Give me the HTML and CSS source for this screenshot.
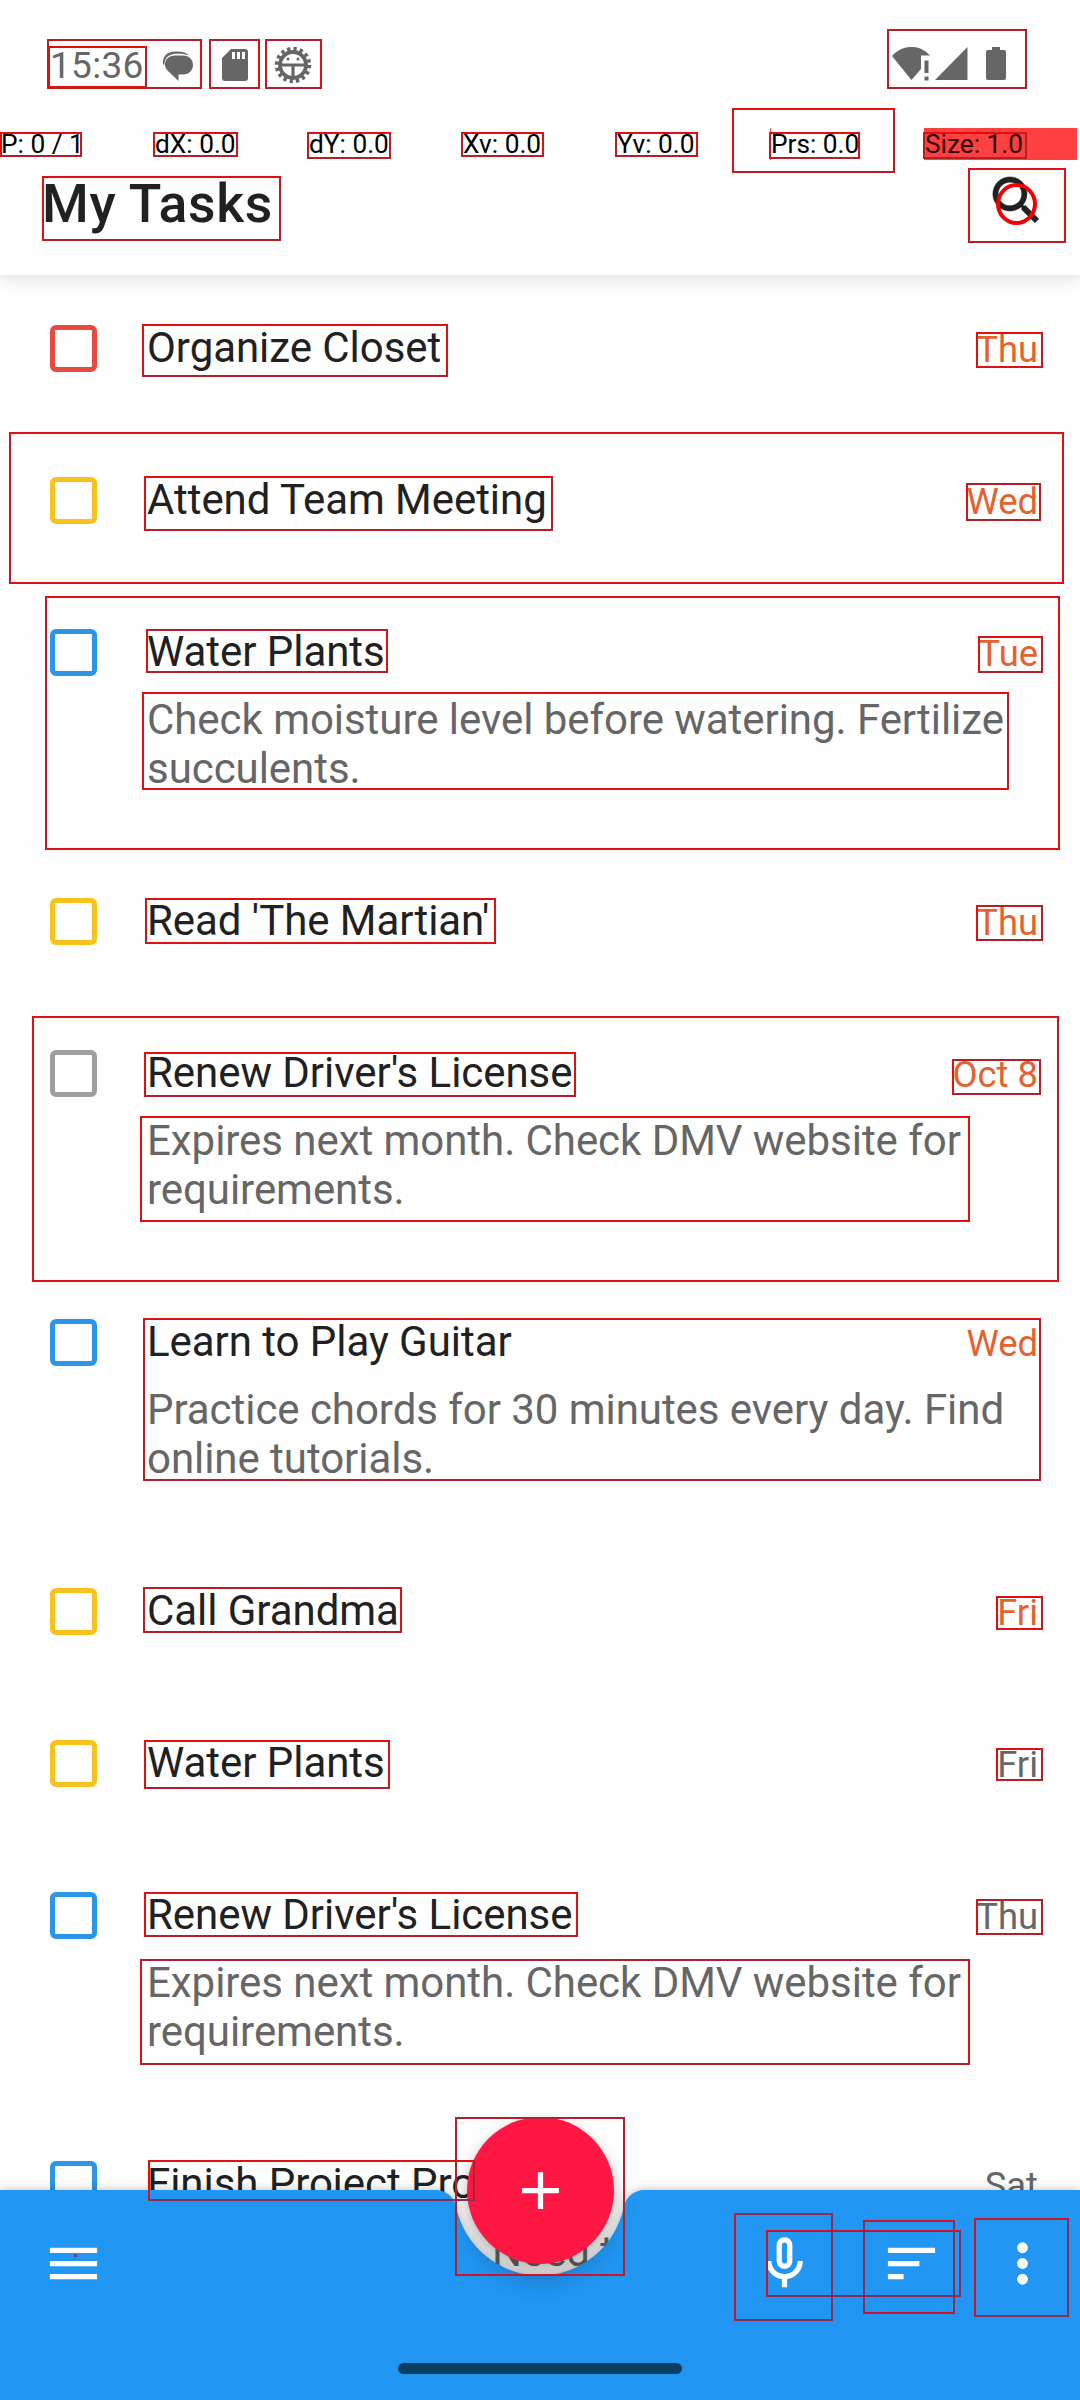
FILE: index.html
```html
<!DOCTYPE html>
<html lang="en">
<head>
<meta charset="utf-8">
<title>My Tasks</title>
<link rel="stylesheet" href="styles.css">
</head>
<body>
<div class="screen">
  <header class="header">
    <div class="status">
      <div class="status-left">
        <span class="clock">15:36</span>
        <svg class="ic-chat" width="32" height="32" viewBox="0 0 32 32"><path d="M1 13C0 5 6 .5 13 .5c6 0 11 .5 14 4-4-2-9-2-14-1.700C6 3.500 2 8 2.500 14z"/><path d="M13 4.500h8c6 0 10 4 10 9.500s-4 9.500-10 9.500h-4.500V30L6 20c-2-2-3-4-3-6.500C3 8 7 4.500 13 4.500z"/></svg>
        <svg class="ic-sd" width="26" height="32" viewBox="0 0 26 32"><path fill-rule="evenodd" d="M9 0h14a3 3 0 0 1 3 3v26a3 3 0 0 1-3 3H3a3 3 0 0 1-3-3V9zM10 3v7h3V3zM15 3v7h3V3zM20 3v7h3V3z"/></svg>
        <svg class="ic-gear" width="38" height="38" viewBox="-19 -19 38 38"><circle r="16" fill="none" stroke="#666" stroke-width="4.500" stroke-dasharray="3.200 3.083"/><circle r="13" fill="none" stroke="#666" stroke-width="3.800"/><path d="M-13 0H13M0 0V13" stroke="#666" stroke-width="3.200"/><path d="M-12-1.500C-11-6-9-9-8-10L-10-10L-13-5Z"/><circle cx="-5" cy="-6" r="1.500"/><circle cx="5" cy="-6" r="1.500"/></svg>
      </div>
      <div class="status-right">
        <svg width="39" height="34" viewBox="0 0 39 34"><path d="M0 9C11-3 28-3 38 8.500H29V22L19.500 33z"/><path d="M32.500 13.500h4V26h-4zM32.500 29.500h4v4h-4z"/></svg>
        <svg class="ic-signal" width="33" height="33" viewBox="0 0 33 33"><path d="M32.500 0v33H0z"/></svg>
        <svg class="ic-batt" width="20" height="33" viewBox="0 0 20 33"><path d="M6 0h8v3h4a2 2 0 0 1 2 2v26a2 2 0 0 1-2 2H2a2 2 0 0 1-2-2V5a2 2 0 0 1 2-2h4z"/></svg>
      </div>
    </div>
    <div class="pointer">
      <span>P: 0 / 1</span><span>dX: 0.0</span><span>dY: 0.0</span><span>Xv: 0.0</span><span>Yv: 0.0</span><span class="prs">Prs: 0.0</span><span class="size">Size: 1.0</span>
    </div>
    <div class="titlebar">
      <h1>My Tasks</h1>
      <svg width="63" height="63" viewBox="0 0 24 24"><path fill="#212121" stroke="#212121" stroke-width=".2" d="M15.500 14h-.79l-.28-.27A6.471 6.471 0 0 0 16 9.500 6.500 6.500 0 1 0 9.500 16c1.610 0 3.090-.59 4.230-1.570l.27.28v.79l5 4.990L20.490 19l-4.990-5zm-6 0C7.010 14 5 11.990 5 9.500S7.010 5 9.500 5 14 7.010 14 9.500 11.990 14 9.500 14z"/></svg>
    </div>
  </header>

  <main class="list">
    <article class="task"><i class="box red"></i><h2>Organize Closet</h2><time class="late">Thu</time></article>
    <article class="task"><i class="box yellow"></i><h2>Attend Team Meeting</h2><time class="late">Wed</time></article>
    <article class="task"><i class="box blue"></i><h2>Water Plants</h2><time class="late">Tue</time><p>Check moisture level before watering. Fertilize succulents.</p></article>
    <article class="task"><i class="box yellow"></i><h2>Read 'The Martian'</h2><time class="late">Thu</time></article>
    <article class="task"><i class="box grey"></i><h2>Renew Driver's License</h2><time class="late">Oct 8</time><p>Expires next month. Check DMV website for requirements.</p></article>
    <article class="task"><i class="box blue"></i><h2>Learn to Play Guitar</h2><time class="late">Wed</time><p>Practice chords for 30 minutes every day. Find online tutorials.</p></article>
    <article class="task"><i class="box yellow"></i><h2>Call Grandma</h2><time class="late">Fri</time></article>
    <article class="task"><i class="box yellow"></i><h2>Water Plants</h2><time>Fri</time></article>
    <article class="task"><i class="box blue"></i><h2>Renew Driver's License</h2><time>Thu</time><p>Expires next month. Check DMV website for requirements.</p></article>
    <article class="task"><i class="box blue"></i><h2>Finish Project Pro</h2><time>Sat</time><p class="tail">Need t</p></article>
  </main>

  <footer class="bar">
    <svg class="bar-shape" width="1080" height="210" viewBox="0 0 1080 210"><path d="M0 0H435.600A21 21 0 0 1 456.200 16.860A85.500 85.500 0 0 0 623.800 16.860A21 21 0 0 1 644.400 0H1080V210H0Z"/></svg>
    <div class="fab"><svg width="63" height="63" viewBox="0 0 24 24"><path fill="#fff" d="M19 13h-6v6h-2v-6H5v-2h6V5h2v6h6z"/></svg></div>
    <nav class="actions">
      <svg class="menu" width="63" height="63" viewBox="0 0 24 24"><path d="M3 18h18v-2H3zM3 13h18v-2H3zM3 6v2h18V6z"/></svg>
      <svg class="mic" width="63" height="63" viewBox="0 0 24 24"><path d="M12 14c1.660 0 3-1.340 3-3V5c0-1.660-1.340-3-3-3S9 3.340 9 5v6c0 1.660 1.340 3 3 3zm-1-9c0-.55.45-1 1-1s1 .45 1 1v6c0 .55-.45 1-1 1s-1-.45-1-1V5zm6 6c0 2.760-2.240 5-5 5s-5-2.240-5-5H5c0 3.530 2.610 6.430 6 6.920V21h2v-3.080c3.390-.49 6-3.390 6-6.920h-2z"/></svg>
      <svg class="sort" width="63" height="63" viewBox="0 0 24 24"><path d="M3 18h6v-2H3zM3 6v2h18V6zm0 7h12v-2H3z"/></svg>
      <svg width="63" height="63" viewBox="0 0 24 24"><circle cx="12" cy="6" r="2.050"/><circle cx="12" cy="12" r="2.050"/><circle cx="12" cy="18" r="2.050"/></svg>
    </nav>
    <div class="handle"></div>
  </footer>

  <div class="overlay" id="overlay">
    <i class="ring"></i>
    <i class="dot"></i>
  </div>
</div>
<script src="overlay.js"></script>
</body>
</html>
```
FILE: styles.css
```css
* { box-sizing: border-box; margin: 0; padding: 0; }
body { width: 1080px; background: #fefefe; font-family: Roboto, sans-serif; }
.screen { position: relative; width: 1080px; height: 2400px; overflow: hidden; display: flex; flex-direction: column; background: #fefefe; }
svg { display: block; flex: none; }

.header { position: relative; z-index: 1; height: 275px; flex: none; background: #fefefe; box-shadow: 0 2px 18px rgba(0, 0, 0, .15); }
.status { height: 128px; display: flex; justify-content: space-between; padding: 44px 74px 0 50px; fill: #666; }
.status-left, .status-right { display: flex; align-items: flex-start; }
.clock { width: 112px; font-size: 37px; line-height: 44px; letter-spacing: .3px; color: #666; }
.ic-chat { margin-top: 7px; }
.ic-sd { margin: 5px 0 0 28px; }
.ic-gear { margin: 2px 0 0 26px; }
.status-right { padding-top: 3px; }
.ic-signal { margin-left: 4px; }
.ic-batt { margin-left: 18px; }

.pointer { display: grid; grid-template-columns: repeat(7, 154px); height: 32px; font-size: 26.25px; line-height: 32px; color: #000; }
.pointer span { padding-left: 1px; white-space: nowrap; }
.pointer .prs { box-shadow: inset 1px 0 #c06060; }
.pointer .size { width: 153px; background: #ff4040; color: #300000; }

.titlebar { display: flex; justify-content: space-between; padding: 9px 32px 0 42px; }
h1 { font-size: 53.5px; line-height: 62px; padding-top: 4px; font-weight: 500; letter-spacing: .6px; color: #212121; }

.list { flex: 1; min-height: 0; overflow: hidden; padding: 48px 42px 0 50px; }
.task { display: grid; grid-template-columns: 97px 1fr auto; padding-bottom: 103px; font-size: 42px; line-height: 49px; }
.box { width: 47px; height: 47px; margin-top: 2px; border: 5px solid; border-radius: 6px; }
.red { color: #e64a40; }
.yellow { color: #f8c11c; }
.blue { color: #2b95e7; }
.grey { color: #9e9e9e; }
h2 { font-size: 42px; font-weight: 400; letter-spacing: -.05px; color: #212121; white-space: nowrap; }
time { font-size: 36.4px; line-height: 53px; height: 49px; color: #666; }
.late { color: #e4622f; }
p { grid-column: 2 / 4; margin-top: 19px; letter-spacing: -.05px; color: #666; }
.tail { padding-left: 345px; }

.bar { position: absolute; left: 0; bottom: 0; width: 1080px; height: 210px; z-index: 2; }
.bar-shape { position: absolute; inset: 0; overflow: visible; fill: #2196f3; filter: drop-shadow(0 0 5px rgba(0, 0, 0, .25)); }
.fab { position: absolute; left: 467px; top: -73px; width: 147px; height: 147px; border-radius: 50%; background: #ff1744; display: grid; place-items: center; box-shadow: 0 16px 24px rgba(0, 0, 0, .2), 0 2px 10px rgba(0, 0, 0, .14); }
.actions { position: relative; display: flex; padding: 42px 26px 0 42px; fill: #fff; }
.mic { margin-left: auto; }
.sort { margin: 0 48px 0 64px; }
.handle { position: relative; width: 284px; height: 11px; margin: 68px auto 0; border-radius: 6px; background: #0b3c61; }

.overlay { position: absolute; inset: 0; z-index: 3; }
.frame { position: absolute; border: 2px solid; }
.ring { position: absolute; left: 996px; top: 183px; width: 41px; height: 42px; border: 4px solid #f00000; border-radius: 50%; }
.dot { position: absolute; left: 74px; top: 2254px; width: 3px; height: 3px; background: #76407e; }
```
FILE: overlay.js
```js
// Frames as [left, top, right, bottom].
const frames = [
  [47,39,202,89],[48,46,147,88],[209,39,260,89],[265,39,322,89],
  [0,132,82,157],[153,132,238,157],[307,132,391,159],[461,132,544,157],
  [615,132,698,157],[732,108,895,173],[769,132,860,159],[923,132,1027,159],
  [887,29,1027,89],[42,176,281,241],[968,168,1066,243],
  [142,324,448,377],[9,432,1064,584],[144,476,553,531],[45,596,1060,850],
  [146,629,388,673],[142,692,1009,790],[976,332,1043,368],[966,483,1041,521],
  [978,636,1043,673],[145,898,496,944],[976,905,1043,941],[32,1016,1059,1282],
  [144,1052,576,1097],[140,1116,970,1222],[952,1059,1041,1095],[143,1318,1041,1481],
  [143,1587,402,1633],[996,1596,1043,1630],[144,1740,390,1789],[996,1748,1043,1781],
  [144,1892,578,1937],[976,1899,1043,1935],[140,1959,970,2065],
  [148,2160,475,2201],[455,2117,625,2276],
  [734,2213,833,2321],[766,2230,961,2297],[863,2220,955,2314],[974,2218,1069,2317]
];
const overlay = document.getElementById('overlay');
// Edges starting on an odd pixel are drawn in the darker tone.
const tone = (edge, onBar) => edge % 2 ? (onBar ? '#862e5c' : '#b42026') : (onBar ? '#cc1428' : '#e01010');
for (const [l, t, r, b] of frames) {
  const el = document.createElement('i');
  const onBar = t > 2190;
  el.className = 'frame';
  el.style.left = l + 'px';
  el.style.top = t + 'px';
  el.style.width = (r - l) + 'px';
  el.style.height = (b - t) + 'px';
  // The far edges begin two pixels before the outer bound, so parity is unchanged.
  el.style.borderColor = [tone(t, onBar), tone(r, onBar), tone(b, onBar || b > 2190), tone(l, onBar)].join(' ');
  overlay.appendChild(el);
}
```
